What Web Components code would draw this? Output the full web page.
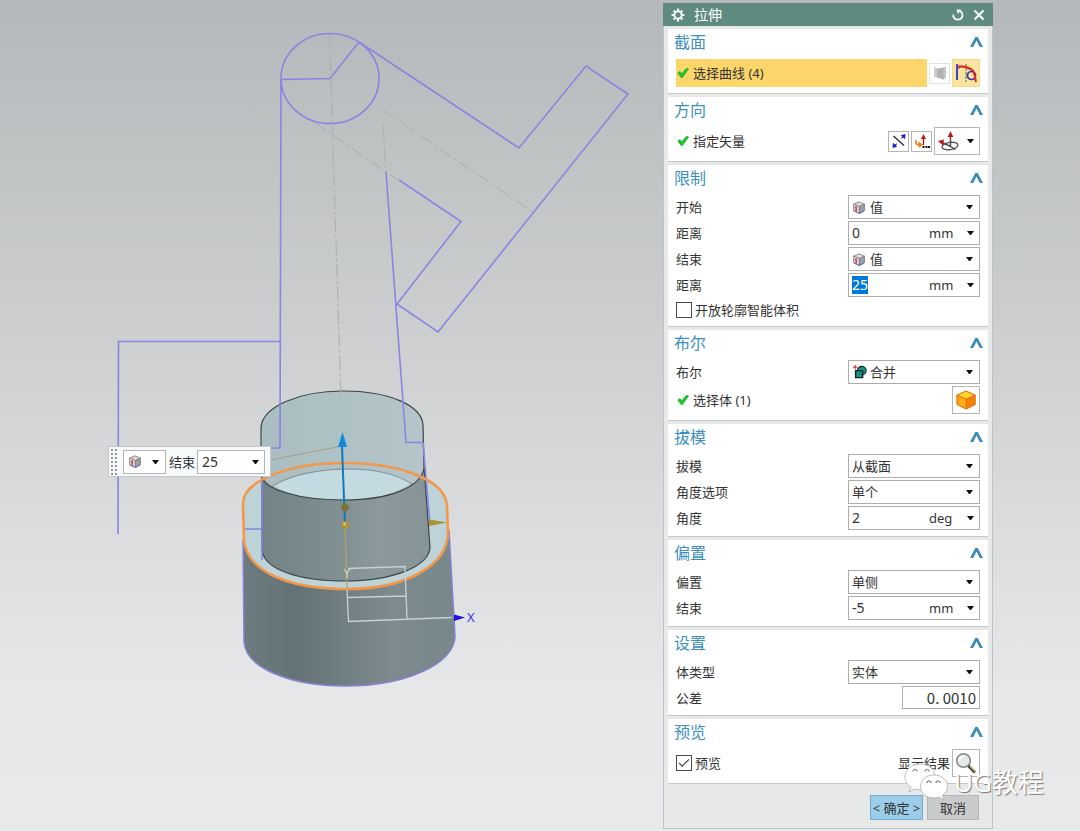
<!DOCTYPE html>
<html lang="zh-CN">
<head>
<meta charset="utf-8">
<title>拉伸</title>
<style>
  body {
    margin: 0;
    font: 13px/20px "Noto Sans", "Noto Sans CJK SC", sans-serif;
    color: #333;
    background: #e6e8ea;
  }
</style>
</head>
<body>

<cad-viewport>
  <cad-scene></cad-scene>
  <value-toolbar slot="float" label="结束" value="25"></value-toolbar>
  <nx-dialog slot="dialog" heading="拉伸">
    <nx-group heading="截面">
      <nx-row active check text="选择曲线 (4)">
        <nx-tool icon="face" label="绘制截面" size="small" soft></nx-tool>
        <nx-tool icon="curve" label="曲线" active></nx-tool>
      </nx-row>
    </nx-group>
    <nx-group heading="方向">
      <nx-row check text="指定矢量">
        <nx-tool icon="reverse" label="反向" size="small"></nx-tool>
        <nx-tool icon="vectorDialog" label="矢量对话框" size="small"></nx-tool>
        <nx-tool icon="vector" label="矢量" menu></nx-tool>
      </nx-row>
    </nx-group>
    <nx-group heading="限制">
      <nx-select label="开始" value="值" icon="cube"></nx-select>
      <nx-measure label="距离" value="0" unit="mm"></nx-measure>
      <nx-select label="结束" value="值" icon="cube"></nx-select>
      <nx-measure label="距离" value="25" unit="mm" selected></nx-measure>
      <nx-check label="开放轮廓智能体积"></nx-check>
    </nx-group>
    <nx-group heading="布尔">
      <nx-select label="布尔" value="合并" icon="unite"></nx-select>
      <nx-row check text="选择体 (1)">
        <nx-tool icon="body" label="体"></nx-tool>
      </nx-row>
    </nx-group>
    <nx-group heading="拔模">
      <nx-select label="拔模" value="从截面"></nx-select>
      <nx-select label="角度选项" value="单个"></nx-select>
      <nx-measure label="角度" value="2" unit="deg"></nx-measure>
    </nx-group>
    <nx-group heading="偏置">
      <nx-select label="偏置" value="单侧"></nx-select>
      <nx-measure label="结束" value="-5" unit="mm"></nx-measure>
    </nx-group>
    <nx-group heading="设置">
      <nx-select label="体类型" value="实体"></nx-select>
      <nx-number label="公差" value="0. 0010"></nx-number>
    </nx-group>
    <nx-group heading="预览">
      <nx-check label="预览" checked tall>
        <span>显示结果</span>
        <nx-tool icon="magnifier" label="显示结果"></nx-tool>
      </nx-check>
    </nx-group>
    <nx-button slot="actions" primary>&lt; 确定 &gt;</nx-button>
    <nx-button slot="actions">取消</nx-button>
  </nx-dialog>
  <page-mark slot="mark">UG教程</page-mark>
</cad-viewport>

<script>
const ICONS = {
  gear: `<svg width="14" height="14" viewBox="0 0 14 14"><circle cx="7" cy="7" r="3.7" fill="none" stroke="#fff" stroke-width="2"/><path d="M7 .6v2M7 11.4v2M.6 7h2M11.4 7h2M2.5 2.5l1.4 1.4M10.1 10.1l1.4 1.4M11.5 2.5l-1.4 1.4M3.9 10.1l-1.4 1.4" stroke="#fff" stroke-width="2"/></svg>`,
  reset: `<svg width="12" height="12" viewBox="0 0 12 12"><path d="M1.3 5.500A4.600 4.600 0 1 0 7.500 1.800" fill="none" stroke="#fff" stroke-width="1.800"/><path d="M4.500 .5h4.500L6 5z" fill="#fff"/></svg>`,
  close: `<svg width="12" height="12" viewBox="0 0 12 12"><path d="M1.5 1.5l9 9M10.5 1.5l-9 9" stroke="#fff" stroke-width="2"/></svg>`,
  chevron: `<svg width="13" height="10" viewBox="0 0 13 10"><path d="M0 10 5.300 0h2.400L13 10h-3.200L6.500 3.600 3.200 10z" fill="#3a8abb"/></svg>`,
  tick: `<svg width="12" height="12" viewBox="0 0 12 12"><path d="M.8 6 3 4.600 4.800 6.800 9.500 1.300 11.500 2 5.300 10.600 4.200 10.600z" fill="#1fc52f" stroke="#17b52a" stroke-width=".8"/></svg>`,
  caret: `<svg width="7" height="4" viewBox="0 0 7 4"><path d="M0 0h7L4 4H3z" fill="#111"/></svg>`,
  face: `<svg width="14" height="16" viewBox="0 0 14 16"><path d="M1 2 4 3.500 13 2v10l-2.500 2.500L1 11.500z" fill="#b3b3b3"/><path d="M1 2 4 3.500v8.900L1 11.500z" fill="#cfcfcf"/><path d="M10.500 2.400 13 2v10l-2.500 2.500z" fill="#c4c4c4"/></svg>`,
  curve: `<svg width="24" height="24" viewBox="0 0 24 24"><path d="M3 19V3" stroke="#3431c8" stroke-width="1.800"/><path d="M3 8 8 5l12 5" fill="none" stroke="#4a45c8" stroke-width="1.200"/><circle cx="17.500" cy="14.500" r="4" fill="none" stroke="#2c2fc4" stroke-width="1.700"/><path d="M12 3v18" stroke="#55733a" stroke-dasharray="3 1"/><path d="M3 5.500C10 5 17 6.500 19.500 10.500c1.500 3 1.500 6 2.500 10.500" fill="none" stroke="#e02a18" stroke-width="2"/></svg>`,
  reverse: `<svg width="16" height="16" viewBox="0 0 16 16"><path d="M2.500 3 13 12.500" stroke="#333" stroke-width="1.500"/><path d="M3 13.500 13 2.500" stroke="#2626c8" stroke-width="1.200" stroke-dasharray="4 7"/><path d="M14.500 1 14 6.200 9.800 2.200zM1.500 15 2 9.800 6.200 13.800z" fill="#1d1dd0"/></svg>`,
  vectorDialog: `<svg width="16" height="16" viewBox="0 0 16 16"><path d="M9.500 12V5" stroke="#a11" stroke-width="1.300"/><path d="M9.500 1l2.500 5H7z" fill="#c31414"/><path d="M2 7c-.8 4 1 5.500 4 4.500" fill="none" stroke="#f08a24" stroke-width="1.800"/><path d="M4 8.500l5 3L5 15z" fill="#ee7b1c"/><path d="M8.500 14h2M11.500 14h2M14 14h2" stroke="#111" stroke-width="2"/></svg>`,
  vector: `<svg width="22" height="22" viewBox="0 0 22 22"><ellipse cx="12" cy="16" rx="8" ry="3.600" transform="rotate(-8 12 16)" fill="none" stroke="#555" stroke-width="1.300"/><path d="M12.500 6v10.500L4 12.500M12.500 16.500l5 3" fill="none" stroke="#444" stroke-width="1.400"/><path d="M12.500 1l2.800 6H9.700zM0 11l6-1.500-1 6z" fill="#c01515"/></svg>`,
  cube: `<svg width="12" height="13" viewBox="0 0 12 13"><path d="M.5 3.200 6 .800l5.500 2.400-5 2.300z" fill="#dedcdc" stroke="#777" stroke-width=".8"/><path d="M.5 3.200l6 2.300V12.500L.500 9.500z" fill="#dccfce" stroke="#888" stroke-width=".8"/><path d="M6.500 5.500l5-2.300v6.300l-5 3z" fill="#9a9ea5" stroke="#778" stroke-width=".8"/><path d="M3.200 5.500v5M1.800 6.700h1.600" stroke="#d33232" stroke-width="1.300"/><path d="M.8 10l5.700 2.600 4.800-2.800" fill="none" stroke="#5a72c4"/></svg>`,
  unite: `<svg width="14" height="14" viewBox="0 0 14 14"><circle cx="8.800" cy="5.600" r="4.300" fill="#199386" stroke="#0d302c" stroke-width="1.200"/><path d="M2.600 5.600h7v7h-7z" fill="#199386" stroke="#102522" stroke-width="1.400"/><path d="M5.500 5.600h4v3.500" fill="none" stroke="#0d302c"/><path d="M0 2.200h4.500M2.200 0v4.500" stroke="#d22" stroke-width="1"/></svg>`,
  body: `<svg width="20" height="20" viewBox="0 0 20 20"><path d="M.8 5.200 10 1l9.200 4-9 4.200z" fill="#ffd52e"/><path d="M.8 5.200l9.400 4V19L1 14.500z" fill="#ffab14"/><path d="M10.200 9.200l9-4.200v9.500l-9 4.500z" fill="#f58207"/><path d="M.8 5.200 10 1l9.200 4v9.500l-9 4.500L1 14.500zM.8 5.200l9.400 4 9-4.200M10.200 9.200V19" fill="none" stroke="#e5630b" stroke-width="1"/></svg>`,
  magnifier: `<svg width="22" height="22" viewBox="0 0 22 22"><path d="M13 13.500l7 7" stroke="#444" stroke-width="3"/><path d="M15 14.500l5.500 5" stroke="#c9b552" stroke-width="1.300"/><circle cx="8.500" cy="8.500" r="6.800" fill="#e6e9ea" stroke="#858585" stroke-width="1.500"/><path d="M4.500 9a4 4 0 0 1 4-4.500" fill="none" stroke="#fff" stroke-width="1.800"/></svg>`
};

const BASE = `
  *, *::before, *::after { box-sizing: border-box; }
  svg { display: block; flex: none; }
  button, input, select { font: inherit; color: inherit; margin: 0; }
`;

const FIELD = `
  :host { display: grid; grid-template-columns: 1fr 132px; align-items: center; min-height: 24px; }
  .box { position: relative; display: flex; align-items: center; height: 24px; background: #fff; border: 1px solid #adadad; }
`;

class NxElement extends HTMLElement {
  constructor() {
    super();
    this.attachShadow({ mode: "open" });
  }
  connectedCallback() {
    this.shadowRoot.innerHTML = `<style>${BASE}${this.styles()}</style>${this.render()}`;
    this.ready();
  }
  attr(name) {
    return this.getAttribute(name) || "";
  }
  ready() {}
}

class CadViewport extends NxElement {
  styles() {
    return `
      :host { display: block; position: relative; min-height: 100vh; overflow: hidden;
        background: linear-gradient(#b5b8ba, #d1d3d4 48%, #e6e8ea 84%, #e7e9eb); }
      slot[name="float"]::slotted(*) { position: absolute; left: 108px; top: 446px; }
      slot[name="dialog"]::slotted(*) { position: absolute; right: 87px; top: 3px; }
      slot[name="mark"]::slotted(*) { position: absolute; right: 36px; top: 762px; }
    `;
  }
  render() {
    return `<slot></slot><slot name="float"></slot><slot name="dialog"></slot><slot name="mark"></slot>`;
  }
}

class CadScene extends NxElement {
  styles() {
    return `
      :host { display: block; position: absolute; left: 0; top: 0; }
      .sketch { fill: none; stroke: #8a84e2; stroke-width: 1.6; }
      .axis { fill: none; stroke: #adadab; stroke-width: 1; stroke-dasharray: 14 3 3 3; }
      .edge { fill: none; stroke: #3c4648; stroke-width: 1.2; }
      .csys { fill: none; stroke: #c9d0d0; stroke-width: 1.3; }
      text { font: 13px "Noto Sans", sans-serif; }
    `;
  }
  render() {
    return `
      <svg width="660" height="700" viewBox="0 0 660 700" role="img" aria-label="模型">
        <defs>
          <linearGradient id="base">
            <stop offset="0" stop-color="#6c7b7d"/>
            <stop offset=".25" stop-color="#647375"/>
            <stop offset=".7" stop-color="#7d8b8e"/>
            <stop offset="1" stop-color="#78878a"/>
          </linearGradient>
          <linearGradient id="boss">
            <stop offset="0" stop-color="#738386"/>
            <stop offset=".25" stop-color="#78888b"/>
            <stop offset=".7" stop-color="#8b999d"/>
            <stop offset="1" stop-color="#869498"/>
          </linearGradient>
          <linearGradient id="top">
            <stop offset="0" stop-color="#a9bec2"/>
            <stop offset="1" stop-color="#b5c5c9"/>
          </linearGradient>
        </defs>

        <!-- lower body and its top face -->
        <path d="M243 540 244 642C246 668 290 686 345 686 405 686 455 664 455 636L449 530z" fill="url(#base)"/>
        <path d="M243 503C244 480 290 463 345 463 400 463 446 480 447 506L448 532C448 566 405 589 347 589 289 589 247 572 244 540z" fill="#bdd3d8"/>
        <path d="M243 540 244 642C246 668 290 686 345 686 405 686 455 664 455 636L449 530" fill="none" stroke="#8683d2" stroke-width="1.500"/>

        <!-- upper body -->
        <path d="M261 427C263 407 298 391 343 391 390 391 422 406 423 425L430 548C428 567 392 581 345 581 300 581 264 570 262 550z" fill="url(#top)"/>
        <path d="M262 477C270 492 305 500 344 500 385 500 420 489 425 468L430 548C428 567 392 581 345 581 300 581 264 570 262 550z" fill="url(#boss)"/>
        <path d="M274 486C292 475 318 469 350 469 380 469 400 475 411 483 395 495 370 500 344 500 315 500 290 495 274 486z" fill="#c3dae1"/>
        <path d="M262 499C266 482 305 469 350 469 390 469 417 482 427 499" fill="none" stroke="#7e8d91"/>
        <path class="edge" d="M261 477V427C263 407 298 391 343 391 390 391 422 406 423 425L424 468C421 487 390 500 344 500 300 500 262 490 261 474M262 480V550C264 570 300 581 345 581 392 581 428 567 430 548L424 466"/>

        <!-- section curves -->
        <ellipse class="sketch" cx="330" cy="78.500" rx="49" ry="45"/>
        <path class="sketch" d="M281 79.500 330 78.500 359 42M281 80 280 448H270M359 42 519 148 586 66 628 94 438 332 397 304 461 221.500 399 180M386 172 406 442.500H423M118 534 118.500 341.500H280M423 442 430 525M262 478V560M245 529H262"/>
        <path class="axis" d="M329.500 34 341 400M314 122 398 180M383 110 534 213M383 125 386 172"/>

        <path d="M243 503C244 480 290 463 345 463 400 463 446 480 447 506L448 532C448 566 405 589 347 589 289 589 247 572 244 540z" fill="none" stroke="#f3984b" stroke-width="2.600"/>

        <!-- datum csys -->
        <path class="csys" d="M347 589 348.500 621.500 452 617.500M348 568.500 405 566.500 407 619M348 597.500 406 596"/>
        <path d="M345 525 347 590" stroke="#b8a35d" stroke-width="1.200"/>
        <path d="M344 569 347 573 350 569M347 573V578" fill="none" stroke="#d5d4c6" stroke-width="1.200"/>
        <path d="M454 614.500 465 617.500 454 621z" fill="#2011dd"/>
        <text x="467" y="622" fill="#3a32f0">X</text>

        <!-- drag handles -->
        <path d="M270 460 342 446" stroke="#a8a07c" stroke-width="1"/>
        <path d="M342 446 345 525" stroke="#1377b9" stroke-width="2"/>
        <path d="M342.500 432 347 447H338z" fill="#108bdd"/>
        <circle cx="345" cy="507.500" r="3.800" fill="#7e7234"/>
        <circle cx="345.500" cy="525" r="4" fill="#ad9637"/>
        <circle cx="344.500" cy="524" r="1.300" fill="#e0d08a"/>
        <path d="M429 519.500 447 522.500 429 526z" fill="#ab9131"/>
      </svg>
    `;
  }
}

class ValueToolbar extends NxElement {
  styles() {
    return `
      :host { display: flex; align-items: center; height: 31px; padding: 0 5px 0 1px; background: #f7fafb; border: 1px solid #c4c8ca; box-sizing: border-box; }
      .grip { width: 8px; height: 28px; margin-right: 5px; background: radial-gradient(circle, #8f9598 1px, transparent 1px) 0 0 / 4px 4px; }
      .pick, .value { display: flex; align-items: center; justify-content: space-between; height: 24px; background: #fff; border: 1px solid #b2b5b7; }
      .pick { width: 43px; padding: 0 6px 0 5px; }
      .value { width: 68px; padding-right: 5px; }
      label { width: 31px; padding-left: 3px; white-space: nowrap; }
      input { width: 40px; height: 20px; padding: 0 4px; border: 0; outline: 0; background: none; font-size: 14px; }
      .drop { display: flex; padding: 0; border: 0; background: none; }
    `;
  }
  render() {
    return `
      <span class="grip"></span>
      <button class="pick" aria-label="值">${ICONS.cube}${ICONS.caret}</button>
      <label for="v">${this.attr("label")}</label>
      <span class="value"><input id="v" value="${this.attr("value")}"><button class="drop" aria-label="选项">${ICONS.caret}</button></span>
    `;
  }
}

class NxDialog extends NxElement {
  styles() {
    return `
      :host { display: block; box-sizing: border-box; width: 330px; background: #e7e8e8; border: solid #bcc3c4; border-width: 0 1px 1px; }
      header { display: flex; align-items: center; gap: 9px; height: 23px; margin: 0 -1px; padding: 0 8px; background: #5e8a80; color: #fff; }
      h1 { flex: 1; margin: 0; font-size: 14px; line-height: 22px; font-weight: 400; }
      header button { display: flex; padding: 0; border: 0; background: none; }
      .groups { display: grid; gap: 3px; padding: 3px 4px 0; }
      footer { display: flex; justify-content: flex-end; gap: 4px; padding: 11px 13px 8px; }
    `;
  }
  render() {
    return `
      <header>${ICONS.gear}<h1>${this.attr("heading")}</h1>
        <button aria-label="重置">${ICONS.reset}</button>
        <button aria-label="关闭">${ICONS.close}</button>
      </header>
      <div class="groups"><slot></slot></div>
      <footer><slot name="actions"></slot></footer>
    `;
  }
}

class NxGroup extends NxElement {
  styles() {
    return `
      :host { display: block; background: #fff; border-bottom: 1px solid #c6c8c9; }
      header { display: flex; align-items: center; justify-content: space-between; height: 30px; padding: 0 5px 4px 6px; }
      h2 { margin: 0; font-size: 16px; line-height: 26px; font-weight: 400; color: #3d8fc0; }
      button { display: flex; padding: 0; border: 0; background: none; }
      .rows { display: grid; gap: 2px; padding: 0 8px 6px; }
    `;
  }
  render() {
    return `
      <header><h2>${this.attr("heading")}</h2><button aria-label="折叠">${ICONS.chevron}</button></header>
      <div class="rows"><slot></slot></div>
    `;
  }
}

class NxRow extends NxElement {
  styles() {
    return `
      :host { display: flex; align-items: center; gap: 2px; height: 28px; }
      .text { flex: 1; display: flex; align-items: center; gap: 4px; height: 28px; padding-left: 1px; }
      :host([active]) .text { background: #fcd56b; }
    `;
  }
  render() {
    return `<span class="text">${this.hasAttribute("check") ? ICONS.tick : ""}${this.attr("text")}</span><slot></slot>`;
  }
}

class NxTool extends NxElement {
  styles() {
    return `
      :host { display: block; }
      button { display: flex; align-items: center; justify-content: center; width: 28px; height: 28px; padding: 0; background: #fff; border: 1px solid #b5b5b5; }
      :host([size="small"]) button { width: 21px; height: 21px; }
      :host([soft]) button { border-color: #e2e2e2; }
      :host([active]) button { background: #fbe3a0; border-color: #f5d98a; }
      :host([menu]) button { width: 46px; justify-content: space-between; padding: 0 5px 0 3px; }
    `;
  }
  render() {
    return `<button aria-label="${this.attr("label")}">${ICONS[this.attr("icon")]}${this.hasAttribute("menu") ? ICONS.caret : ""}</button>`;
  }
}

class NxSelect extends NxElement {
  styles() {
    return `${FIELD}
      .box > svg { position: absolute; right: 6px; pointer-events: none; }
      .icon { position: absolute; left: 4px; pointer-events: none; }
      select { appearance: none; width: 100%; height: 22px; padding: 0 16px 0 3px; border: 0; border-radius: 0; outline: 0; background: none; }
      .icon + select { padding-left: 21px; }
    `;
  }
  render() {
    const icon = this.attr("icon");
    return `
      <label for="f">${this.attr("label")}</label>
      <span class="box">
        ${icon ? `<span class="icon">${ICONS[icon]}</span>` : ""}
        <select id="f"><option>${this.attr("value")}</option></select>
        ${ICONS.caret}
      </span>
    `;
  }
}

class NxMeasure extends NxElement {
  styles() {
    return `${FIELD}
      input { flex: 1; min-width: 0; height: 18px; padding: 0 3px; border: 0; outline: 0; background: none; font-size: 14px; line-height: 18px; }
      input::selection { background: #0078d7; color: #fff; }
      .unit { width: 36px; }
      button { display: flex; width: 14px; padding: 0 0 0 2px; border: 0; background: none; }
    `;
  }
  render() {
    return `
      <label for="f">${this.attr("label")}</label>
      <span class="box">
        <input id="f" value="${this.attr("value")}">
        <span class="unit">${this.attr("unit")}</span>
        <button aria-label="选项">${ICONS.caret}</button>
      </span>
    `;
  }
  ready() {
    if (this.hasAttribute("selected")) {
      const input = this.shadowRoot.getElementById("f");
      input.focus({ preventScroll: true });
      input.select();
    }
  }
}

class NxNumber extends NxElement {
  styles() {
    return `
      :host { display: flex; align-items: center; justify-content: space-between; height: 23px; }
      input { width: 78px; height: 23px; padding: 0 3px; border: 1px solid #adadad; border-radius: 0; outline: 0; background: #fff; text-align: right; font: 15px "Noto Sans CJK SC", sans-serif; }
    `;
  }
  render() {
    return `<label for="f">${this.attr("label")}</label><input id="f" value="${this.attr("value")}">`;
  }
}

class NxCheck extends NxElement {
  styles() {
    return `
      :host { display: flex; align-items: center; gap: 2px; height: 21px; }
      :host([tall]) { height: 28px; }
      input { appearance: none; display: grid; place-items: center; width: 16px; height: 16px; border: 1px solid #4a4a4a; background: #fff; }
      input:checked::before { content: ""; width: 10px; height: 5px; margin-bottom: 3px; border: solid #333; border-width: 0 0 1px 1px; transform: rotate(-45deg); }
      label { flex: 1; padding-left: 1px; }
    `;
  }
  render() {
    return `<input type="checkbox" id="f"${this.hasAttribute("checked") ? " checked" : ""}><label for="f">${this.attr("label")}</label><slot></slot>`;
  }
}

class NxButton extends NxElement {
  styles() {
    return `
      :host { display: block; }
      button { width: 52px; height: 25px; padding: 0; background: #c9cacb; border: 1px solid #b5b6b7; white-space: nowrap; }
      :host([primary]) button { width: 53px; background: #9bcde8; border-color: #6faed1; }
    `;
  }
  render() {
    return `<button><slot></slot></button>`;
  }
}

class PageMark extends NxElement {
  styles() {
    return `
      :host { display: flex; align-items: center; gap: 6px; height: 40px; font-size: 26px; line-height: 40px; color: #fff; text-shadow: 1px 1px 1px #777; pointer-events: none; }
    `;
  }
  render() {
    return `
      <svg width="44" height="38" viewBox="0 0 44 38" fill="#fff" stroke="#a3a3a3" stroke-width=".7">
        <path d="M16 1C7 1 1 7 1 14c0 4.500 2.500 8 6 10l-2 5 6-3c2 .600 4 .800 6 .800C26 26 31 21 31 14 31 6 25 1 16 1z"/>
        <path d="M30 12c-8 0-13.500 5-13.500 11.500S22 35 30 35c2 0 3.500-.3 5-.8l5 2.600-1.500-4.500c3-2 5-5 5-8.800C43.500 17 38 12 30 12z"/>
        <path d="M9 8.500a2 2 0 0 1 4 0M21 8.500a2 2 0 0 1 4 0M23 20a2 2 0 0 1 4 0M32 20a2 2 0 0 1 4 0" fill="none" stroke="#777" stroke-width="1.200"/>
      </svg>
      <span><slot></slot></span>
    `;
  }
}

customElements.define("cad-viewport", CadViewport);
customElements.define("cad-scene", CadScene);
customElements.define("value-toolbar", ValueToolbar);
customElements.define("nx-dialog", NxDialog);
customElements.define("nx-group", NxGroup);
customElements.define("nx-row", NxRow);
customElements.define("nx-tool", NxTool);
customElements.define("nx-select", NxSelect);
customElements.define("nx-measure", NxMeasure);
customElements.define("nx-number", NxNumber);
customElements.define("nx-check", NxCheck);
customElements.define("nx-button", NxButton);
customElements.define("page-mark", PageMark);
</script>
</body>
</html>
